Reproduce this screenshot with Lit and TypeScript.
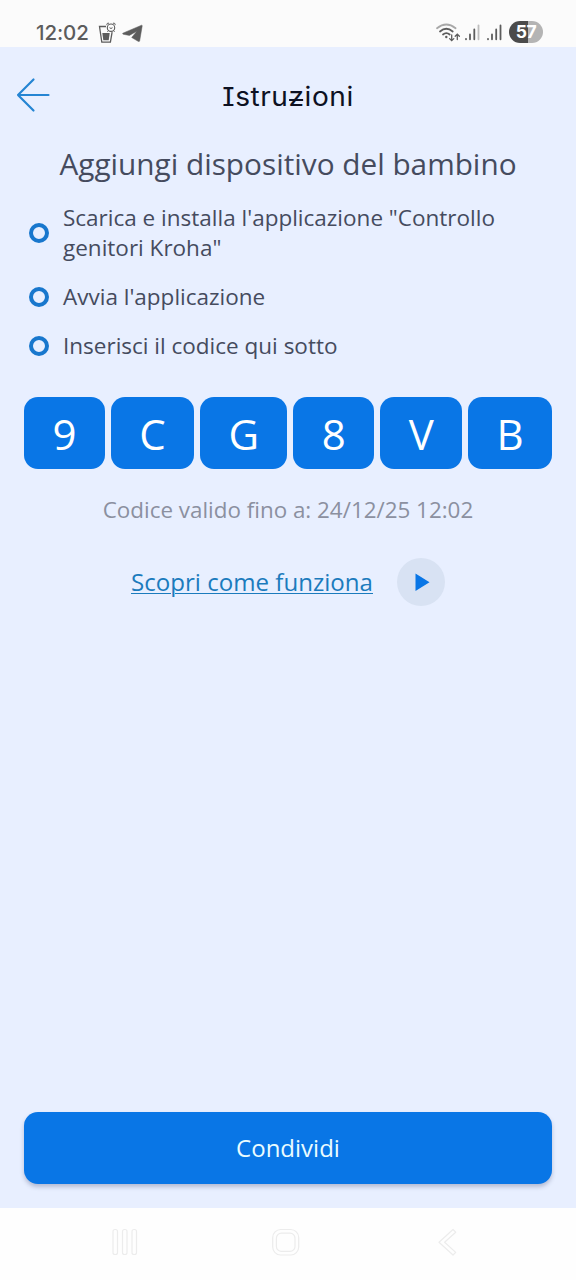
import { LitElement, html, css } from "lit";
import { customElement } from "lit/decorators.js";

@customElement("status-bar")
class StatusBar extends LitElement {
  static styles = css`
    :host { display: flex; height: 47px; background: #fbfbfb; color: #5c5c5c; box-sizing: border-box;
      padding: 18px 33px 0 36px; justify-content: space-between; align-items: flex-start; }
    .group { display: flex; height: 28px; align-items: center; }
    .time { font: 500 20.5px/28px Inter, sans-serif; letter-spacing: -0.1px; width: 54px; margin: 1px 8px 0 0; white-space: nowrap; }
    .battery { width: 34px; height: 22px; border-radius: 11px; margin-left: 6px; color: #fff;
      background: linear-gradient(90deg, #4b4b4b 57%, #b4b4b4 57%);
      font: 700 17.5px/22px Inter, sans-serif; text-align: center; letter-spacing: -0.5px; }
    svg { display: block; }
  `;
  render() {
    return html`
      <div class="group">
        <div class="time">12:02</div>
        <svg width="46" height="28" viewBox="98 18 46 28" fill="none" stroke="#5c5c5c">
          <path d="M106 26.500h-6.500l2.300 15.700h8.600l1.700-10" stroke-width="1.300" />
          <path d="M102.300 33h7.400l-1 7.300h-5.400z" fill="#5c5c5c" stroke="none" />
          <circle cx="111" cy="27.700" r="3.700" stroke-width="1.100" />
          <path d="M107 25.200c-.6-1.500.6-2.500 2-1.900M113 23.300c1.400-.6 2.600.4 2 1.900M109.500 27.700l1.500.8 1.500-.8M108.400 30.800l-1 1M113.600 30.800l1 1" stroke-width="1" />
          <path d="M122.800 33.200 L141.600 25.200 C142 25.100 142.300 25.400 142.200 25.900 L139.700 40.700 C139.500 41.600 138.800 41.800 138.100 41.300 L131.700 37.500 L136.800 31.200 L129.400 35.400 L123.300 34.300 C122.700 34.100 122.500 33.500 122.800 33.200Z" fill="#5c5c5c" stroke="#5c5c5c" stroke-width="0.500" />
        </svg>
      </div>
      <div class="group">
        <svg width="68" height="28" viewBox="435 18 68 28" fill="none" stroke-linecap="round">
          <path d="M437 28.200q9.300-7.400 18.600 0" stroke="#a8a8a8" stroke-width="1.800" />
          <path d="M440 31.500q6.300-5.400 12.700 0M443 34.500q3.300-2.800 6.700 0" stroke="#5c5c5c" stroke-width="1.800" />
          <circle cx="446.300" cy="37" r="1.200" fill="#5c5c5c" />
          <path d="M451.700 35v5.500M449.600 38.600l2.100 2.100 2.100-2.100M457.300 39.500v-5M455.200 36.300l2.100-2.100 2.100 2.100" stroke="#5c5c5c" stroke-width="1.300" />
          <g stroke="#5c5c5c" stroke-width="1.800">
            <path d="M466 38.800v.5M470 34.500v4.800M474.300 29.500v9.800" />
            <path d="M478.500 25.500v13.800" stroke="#bdbdbd" />
            <path d="M488 38.800v.5M492 34.500v4.800M496.200 29.500v9.800M500.500 25.500v13.800" />
          </g>
        </svg>
        <div class="battery">57</div>
      </div>
    `;
  }
}

@customElement("nav-bar")
class NavBar extends LitElement {
  static styles = css`
    :host { display: flex; height: 72px; background: #fefefe; }
    svg { display: block; }
  `;
  render() {
    return html`
      <svg width="576" height="72" viewBox="0 1208 576 72" fill="none" stroke="#ececec" stroke-width="1.200">
        <rect x="113" y="1229.500" width="4.500" height="25" rx="2" />
        <rect x="122.500" y="1229.500" width="4.500" height="25" rx="2" />
        <rect x="132" y="1229.500" width="4.500" height="25" rx="2" />
        <rect x="272.700" y="1229.500" width="26" height="25.500" rx="8" />
        <rect x="276.400" y="1233.200" width="18.600" height="18.200" rx="5" />
        <path d="M453 1229.500 L439 1242.300 L453 1255 L455.700 1252.400 L444.600 1242.300 L455.700 1232.200 Z" stroke-linejoin="round" />
      </svg>
    `;
  }
}

@customElement("app-root")
class AppRoot extends LitElement {
  static styles = css`
    :host { display: flex; flex-direction: column; height: 1280px; width: 576px; background: #e8efff;
      font-family: "Open Sans", "Noto Sans", sans-serif; color: #454b5e; overflow: hidden; }
    main { flex: 1; display: flex; flex-direction: column; padding: 0 24px 24px; }
    header { display: grid; grid-template-columns: 48px 1fr 48px; height: 96px; margin: 0 -16px; align-items: center; }
    svg { display: block; }
    .title { font: 400 26px/36px Inter, sans-serif; font-feature-settings: "cv08"; color: #0d1122;
      text-align: center; letter-spacing: 0.5px; margin: 4px 0 0; transform: scaleX(1.08); }
    .barred { position: relative; }
    .barred::after { content: ""; position: absolute; left: 1px; right: 1px; top: 58%; height: 2px; background: #0d1122; }
    h2 { font-weight: 400; font-size: 29.750px; line-height: 42px; text-align: center; margin: 0; white-space: nowrap; }
    ul { list-style: none; margin: 18px 0 0; padding: 0 0 0 5px; display: flex; flex-direction: column; gap: 19px; }
    li { display: flex; align-items: center; gap: 14px; font-size: 22.500px; line-height: 30px; }
    .ring { flex: none; width: 20px; height: 20px; box-sizing: border-box; border: 4.500px solid #1877cd; border-radius: 50%; }
    .code { display: flex; gap: 6px; height: 72px; margin-top: 36px; }
    .tile { flex: 1 1 auto; border-radius: 14px; background: #0976e6; color: #fff; font-size: 42px; line-height: 74px; text-align: center; }
    .valid { margin: 26px 0 0; text-align: center; font-size: 22.400px; line-height: 30px; color: #8b90a0; }
    .how { display: flex; justify-content: center; align-items: center; gap: 24px; margin-top: 32.500px; }
    .link { font-size: 24.100px; line-height: 32px; color: #1b7bbd; text-decoration: underline; text-decoration-thickness: 1px; text-underline-offset: 2px; }
    .play { width: 48px; height: 48px; border-radius: 50%; background: #d8e2f3; }
    .share { margin-top: auto; height: 72px; border: 0; border-radius: 14px; background: #0976e6; color: #eafcff;
      font: 400 24px/72px "Open Sans", "Noto Sans", sans-serif; padding: 0; box-shadow: 0 3px 4px rgba(70, 80, 120, 0.32); }
  `;
  private steps = [
    'Scarica e installa l\'applicazione "Controllo genitori Kroha"',
    "Avvia l'applicazione",
    "Inserisci il codice qui sotto",
  ];
  render() {
    return html`
      <status-bar></status-bar>
      <main>
        <header>
          <svg width="48" height="48" viewBox="8 71 48 48" fill="none" stroke="#2585d3" stroke-width="2.200" stroke-linecap="round" stroke-linejoin="round">
            <path d="M48.500 95H18M33.500 79.500L18 95l15.500 15.500" />
          </svg>
          <h1 class="title">Istru<span class="barred">z</span>ioni</h1>
        </header>
        <h2>Aggiungi dispositivo del bambino</h2>
        <ul>${this.steps.map((s) => html`<li><span class="ring"></span><span>${s}</span></li>`)}</ul>
        <div class="code">${[..."9CG8VB"].map((c) => html`<span class="tile">${c}</span>`)}</div>
        <p class="valid">Codice valido fino a: 24/12/25 12:02</p>
        <div class="how">
          <a class="link">Scopri come funziona</a>
          <svg class="play" viewBox="0 0 48 48"><path d="M18.500 15.500v17.500l14-8.750z" fill="#0976e6" /></svg>
        </div>
        <button class="share">Condividi</button>
      </main>
      <nav-bar></nav-bar>
    `;
  }
}
